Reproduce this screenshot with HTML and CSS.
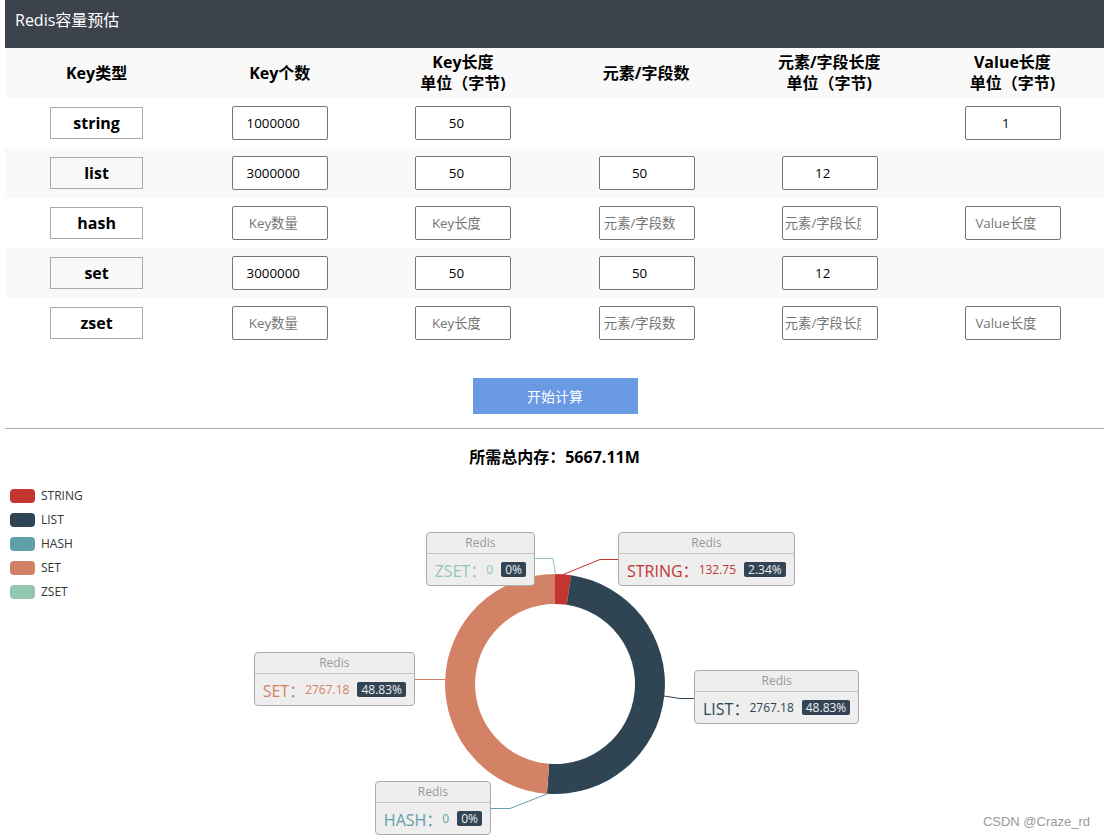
FILE: index.html
```html
<!DOCTYPE html>
<html lang="zh-CN">
<head>
<meta charset="utf-8">
<title>Redis容量预估</title>
<link rel="stylesheet" href="styles.css">
</head>
<body>
<div class="app">
  <header class="topbar">Redis容量预估</header>
  <div class="grid">
    <div class="row head">
      <div class="cell">Key类型</div>
      <div class="cell">Key个数</div>
      <div class="cell">Key长度<br>单位（字节)</div>
      <div class="cell">元素/字段数</div>
      <div class="cell">元素/字段长度<br>单位（字节)</div>
      <div class="cell">Value长度<br>单位（字节)</div>
    </div>
    <div class="row">
      <div class="cell"><span class="type">string</span></div>
      <div class="cell"><input class="inp" value="1000000" placeholder="Key数量"></div>
      <div class="cell"><input class="inp" value="50" placeholder="Key长度"></div>
      <div class="cell"></div>
      <div class="cell"></div>
      <div class="cell"><input class="inp" value="1" placeholder="Value长度"></div>
    </div>
    <div class="row">
      <div class="cell"><span class="type">list</span></div>
      <div class="cell"><input class="inp" value="3000000" placeholder="Key数量"></div>
      <div class="cell"><input class="inp" value="50" placeholder="Key长度"></div>
      <div class="cell"><input class="inp" value="50" placeholder="元素/字段数"></div>
      <div class="cell"><input class="inp" value="12" placeholder="元素/字段长度"></div>
      <div class="cell"></div>
    </div>
    <div class="row">
      <div class="cell"><span class="type">hash</span></div>
      <div class="cell"><input class="inp" placeholder="Key数量"></div>
      <div class="cell"><input class="inp" placeholder="Key长度"></div>
      <div class="cell"><input class="inp" placeholder="元素/字段数"></div>
      <div class="cell"><input class="inp" placeholder="元素/字段长度"></div>
      <div class="cell"><input class="inp" placeholder="Value长度"></div>
    </div>
    <div class="row">
      <div class="cell"><span class="type">set</span></div>
      <div class="cell"><input class="inp" value="3000000" placeholder="Key数量"></div>
      <div class="cell"><input class="inp" value="50" placeholder="Key长度"></div>
      <div class="cell"><input class="inp" value="50" placeholder="元素/字段数"></div>
      <div class="cell"><input class="inp" value="12" placeholder="元素/字段长度"></div>
      <div class="cell"></div>
    </div>
    <div class="row">
      <div class="cell"><span class="type">zset</span></div>
      <div class="cell"><input class="inp" placeholder="Key数量"></div>
      <div class="cell"><input class="inp" placeholder="Key长度"></div>
      <div class="cell"><input class="inp" placeholder="元素/字段数"></div>
      <div class="cell"><input class="inp" placeholder="元素/字段长度"></div>
      <div class="cell"><input class="inp" placeholder="Value长度"></div>
    </div>
  </div>
  <div class="actions"><button class="btn" type="button">开始计算</button></div>
  <div class="divider"></div>
  <h2 class="total">所需总内存：5667.11M</h2>
  <div class="chart">
    <ul class="legend">
      <li><i class="sw c-string"></i>STRING</li>
      <li><i class="sw c-list"></i>LIST</li>
      <li><i class="sw c-hash"></i>HASH</li>
      <li><i class="sw c-set"></i>SET</li>
      <li><i class="sw c-zset"></i>ZSET</li>
    </ul>
    <svg class="pie" width="1099" height="358" viewBox="5 478 1099 358">
      <path fill="#c23531" d="M555 574 A110 110 0 0 1 571.12 575.19 L566.72 604.86 A80 80 0 0 0 555 604 Z"/>
      <path fill="#2f4554" d="M571.12 575.19 A110 110 0 0 1 546.92 793.7 L549.12 763.78 A80 80 0 0 0 566.72 604.86 Z"/>
      <path fill="#d48265" d="M546.92 793.7 A110 110 0 0 1 555 574 L555 604 A80 80 0 0 0 549.12 763.78 Z"/>
      <g fill="none" stroke-width="1">
        <polyline stroke="#c23531" points="562,575 600,559.5 619,559.5"/>
        <polyline stroke="#91c7ae" points="555.5,575 553,558.5 535,558.5"/>
        <polyline stroke="#d48265" points="445,679.5 415,679.5"/>
        <polyline stroke="#2f4554" points="664,696 680,698.5 694,698.5"/>
        <polyline stroke="#61a0a8" points="547,794 510,808.5 491,808.5"/>
      </g>
    </svg>
    <div class="lbl lbl-zset">
      <div class="lbl-h">Redis</div>
      <div class="lbl-b t-zset"><span class="nm">ZSET：</span><span class="vl">0</span><span class="pc">0%</span></div>
    </div>
    <div class="lbl lbl-string">
      <div class="lbl-h">Redis</div>
      <div class="lbl-b t-string"><span class="nm">STRING：</span><span class="vl">132.75</span><span class="pc">2.34%</span></div>
    </div>
    <div class="lbl lbl-set">
      <div class="lbl-h">Redis</div>
      <div class="lbl-b t-set"><span class="nm">SET：</span><span class="vl">2767.18</span><span class="pc">48.83%</span></div>
    </div>
    <div class="lbl lbl-list">
      <div class="lbl-h">Redis</div>
      <div class="lbl-b t-list"><span class="nm">LIST：</span><span class="vl">2767.18</span><span class="pc">48.83%</span></div>
    </div>
    <div class="lbl lbl-hash">
      <div class="lbl-h">Redis</div>
      <div class="lbl-b t-hash"><span class="nm">HASH：</span><span class="vl">0</span><span class="pc">0%</span></div>
    </div>
  </div>
</div>
<div class="watermark">CSDN @Craze_rd</div>
</body>
</html>
```

FILE: styles.css
```css
* { box-sizing: border-box; }
html, body { margin: 0; padding: 0; }
body {
  font-family: "Open Sans", "Noto Sans CJK SC", sans-serif;
  color: #000;
  background: #fff;
  position: relative;
  height: 838px;
  overflow: hidden;
}
.app { margin-left: 5px; width: 1099px; }
.topbar {
  height: 48px;
  background: #3c434c;
  color: #fff;
  font-size: 16px;
  line-height: 24px;
  padding: 8px 10px;
}
.grid { display: flex; flex-direction: column; }
.row {
  display: grid;
  grid-template-columns: repeat(6, 1fr);
  height: 50px;
  align-items: center;
  justify-items: center;
  background: #fff;
}
.row:nth-child(odd) { background: #f9f9f9; }
.head .cell {
  font-weight: bold;
  font-size: 16px;
  line-height: 21px;
  text-align: center;
}
.type {
  display: block;
  width: 93px;
  height: 32px;
  border: 1px solid #a9a9a9;
  font-weight: bold;
  font-size: 16px;
  line-height: 30px;
  text-align: center;
}
.inp {
  display: block;
  width: 96px;
  height: 34px;
  margin: 0 0 0 1px;
  border: 1px solid #767676;
  border-radius: 2px;
  padding: 0 16px 0 2px;
  font-family: "Open Sans", "Noto Sans CJK SC", sans-serif;
  font-size: 13.33px;
  text-align: center;
  color: #000;
  background: #fff;
  outline: none;
}
.inp::placeholder { color: #757575; }
.actions { display: flex; justify-content: center; padding-top: 30px; }
.btn {
  width: 165px;
  height: 36px;
  border: none;
  background: #6a9ae3;
  color: #fff;
  font-family: "Open Sans", "Noto Sans CJK SC", sans-serif;
  font-size: 14px;
  padding: 0;
  margin: 0 0 0 1px;
}
.divider { margin-top: 14px; height: 1px; background: #aaa; }
.total {
  margin: 16px 0 0;
  font-size: 16px;
  line-height: 24px;
  font-weight: bold;
  text-align: center;
}
.chart { position: relative; height: 358px; margin-top: 9px; }
.pie { position: absolute; left: 0; top: 0; }
.legend {
  position: absolute;
  left: 5px;
  top: 11px;
  margin: 0;
  padding: 0;
  list-style: none;
  display: flex;
  flex-direction: column;
  gap: 10px;
  font-size: 12px;
  line-height: 14px;
  color: #333;
  z-index: 1;
}
.legend li { display: flex; align-items: center; gap: 6px; }
.sw { display: block; width: 25px; height: 14px; border-radius: 4px; }
.c-string { background: #c23531; }
.c-list { background: #2f4554; }
.c-hash { background: #61a0a8; }
.c-set { background: #d48265; }
.c-zset { background: #91c7ae; }
.lbl {
  position: absolute;
  background: #eee;
  border: 1px solid #aaa;
  border-radius: 4px;
  font-size: 12px;
  white-space: nowrap;
}
.lbl-h {
  height: 21px;
  line-height: 20px;
  text-align: center;
  color: #999;
  border-bottom: 1px solid #c4c4c4;
}
.lbl-b {
  height: 31px;
  display: flex;
  align-items: center;
  padding: 0 8px;
}
.nm { font-size: 16px; }
.vl { font-size: 12px; margin-right: 8px; }
.pc {
  background: #334455;
  color: #eee;
  padding: 1px 4px;
  border-radius: 2px;
  font-size: 12px;
  line-height: 13px;
}
.t-string { color: #c23531; }
.t-list { color: #2f4554; }
.t-hash { color: #61a0a8; }
.t-set { color: #d48265; }
.t-zset { color: #91c7ae; }
.lbl-zset { right: 569px; top: 54px; }
.lbl-string { left: 613px; top: 54px; }
.lbl-set { right: 689px; top: 174px; }
.lbl-list { left: 689px; top: 192px; }
.lbl-hash { right: 613px; top: 303px; }
.watermark {
  position: absolute;
  right: 14px;
  top: 814px;
  font-family: "Liberation Sans", Arial, sans-serif;
  font-size: 13px;
  line-height: 16px;
  color: #9a9a9a;
}
```
